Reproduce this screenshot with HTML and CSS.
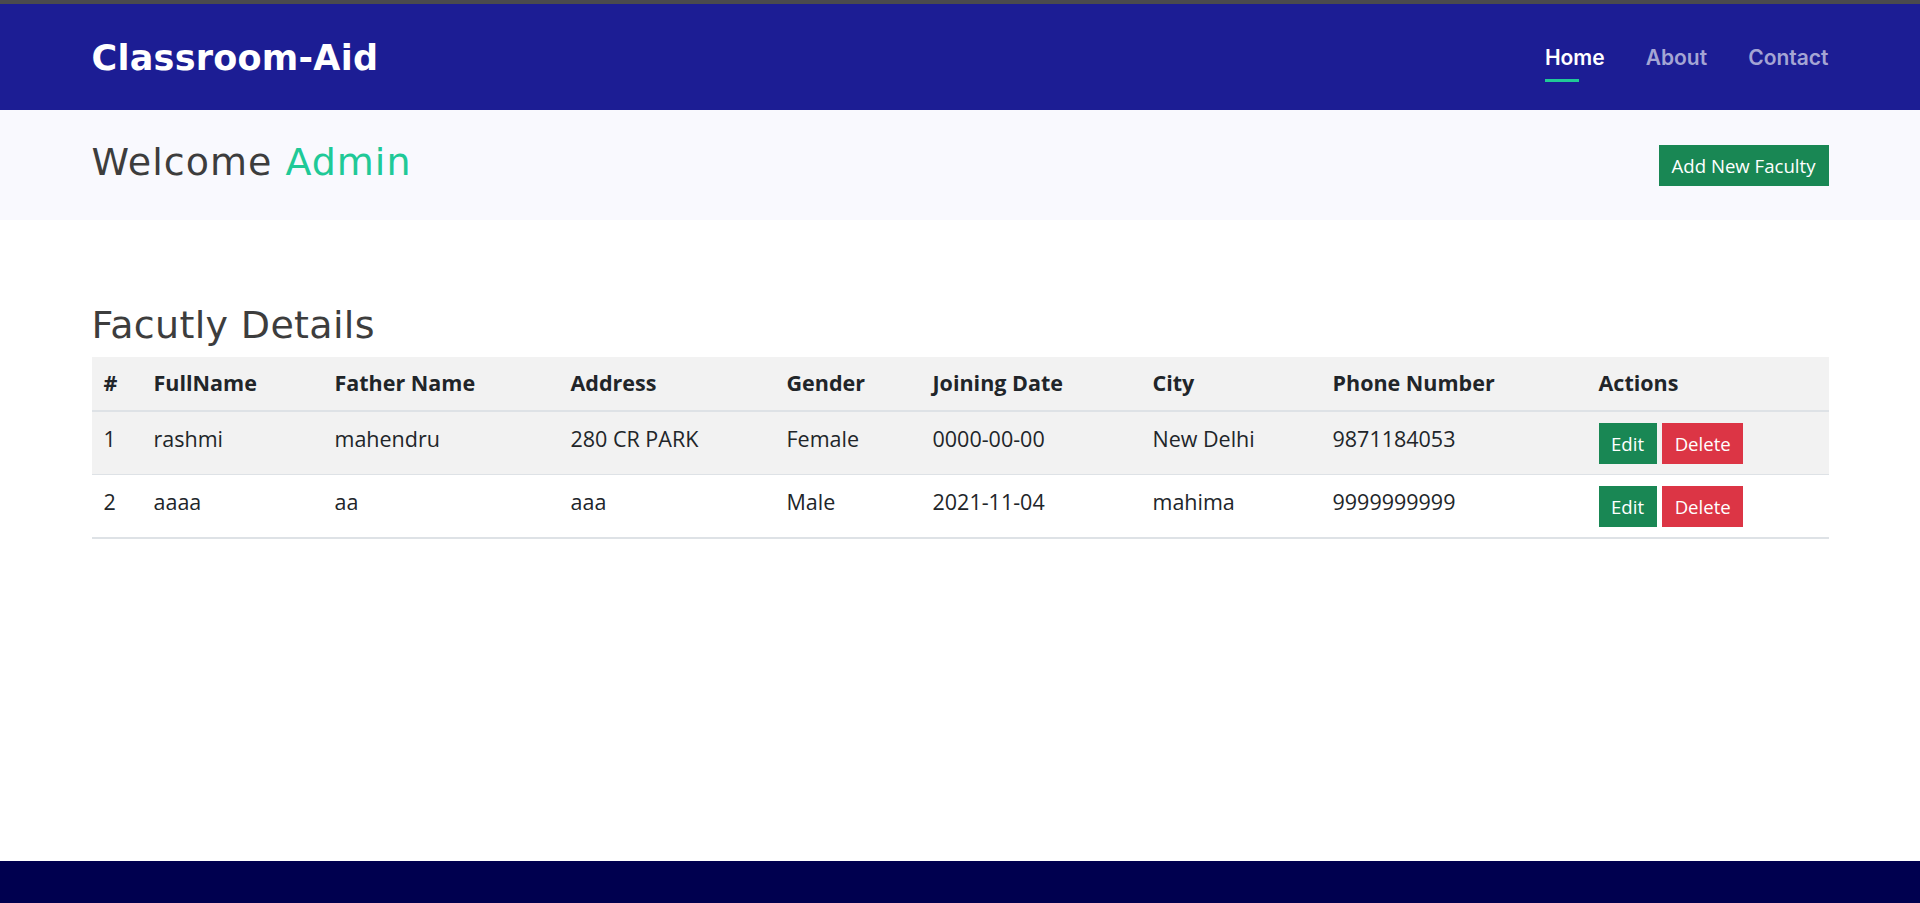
FILE: index.html
```html
<!DOCTYPE html>
<html lang="en">
<head>
<meta charset="utf-8">
<title>Classroom-Aid</title>
<link rel="stylesheet" href="styles.css">
</head>
<body>
<div class="page">
  <div class="topbar"></div>
  <header class="navbar">
    <div class="container nav-inner">
      <a class="brand" href="#">Classroom-Aid</a>
      <nav>
        <ul class="nav-links">
          <li><a class="nav-link active" href="#">Home</a></li>
          <li><a class="nav-link" href="#">About</a></li>
          <li><a class="nav-link" href="#">Contact</a></li>
        </ul>
      </nav>
    </div>
  </header>

  <section class="welcome">
    <div class="container welcome-inner">
      <h1 class="welcome-title">Welcome <span class="accent">Admin</span></h1>
      <button class="btn btn-success btn-add">Add New Faculty</button>
    </div>
  </section>

  <main class="content">
    <div class="container">
      <h2 class="section-title">Facutly Details</h2>
      <table class="faculty-table">
        <colgroup>
          <col class="c1"><col class="c2"><col class="c3"><col class="c4"><col class="c5"><col class="c6"><col class="c7"><col class="c8"><col class="c9">
        </colgroup>
        <thead>
          <tr>
            <th>#</th>
            <th>FullName</th>
            <th>Father Name</th>
            <th>Address</th>
            <th>Gender</th>
            <th>Joining Date</th>
            <th>City</th>
            <th>Phone Number</th>
            <th>Actions</th>
          </tr>
        </thead>
        <tbody>
          <tr class="striped">
            <td>1</td>
            <td>rashmi</td>
            <td>mahendru</td>
            <td>280 CR PARK</td>
            <td>Female</td>
            <td>0000-00-00</td>
            <td>New Delhi</td>
            <td>9871184053</td>
            <td><button class="btn btn-success">Edit</button> <button class="btn btn-danger">Delete</button></td>
          </tr>
          <tr>
            <td>2</td>
            <td>aaaa</td>
            <td>aa</td>
            <td>aaa</td>
            <td>Male</td>
            <td>2021-11-04</td>
            <td>mahima</td>
            <td>9999999999</td>
            <td><button class="btn btn-success">Edit</button> <button class="btn btn-danger">Delete</button></td>
          </tr>
        </tbody>
      </table>
    </div>
  </main>

  <footer class="footer"></footer>
</div>
</body>
</html>
```

FILE: styles.css
```css
* {
  box-sizing: border-box;
}

html, body {
  margin: 0;
  padding: 0;
}

body {
  font-family: "Open Sans", "Liberation Sans", sans-serif;
  font-size: 18px;
  line-height: 1.5;
  color: #212529;
  background: #ffffff;
}

.page {
  min-height: 100vh;
  display: flex;
  flex-direction: column;
}

.container {
  width: 1737px;
  margin: 0 auto;
}

.topbar {
  height: 4px;
  background: #4a4a4e;
}

.navbar {
  background: #1c1d94;
  height: 106px;
}

.nav-inner {
  height: 100%;
  display: flex;
  align-items: center;
  justify-content: space-between;
}

.brand {
  font-family: "DejaVu Sans", sans-serif;
  font-weight: bold;
  font-size: 35px;
  line-height: 1.2;
  color: #ffffff;
  text-decoration: none;
  letter-spacing: 0.25px;
  margin-top: 2px;
}

.nav-links {
  list-style: none;
  margin: 2px 0 0;
  padding: 0;
  display: flex;
  gap: 41px;
}

.nav-link {
  position: relative;
  display: block;
  font-family: "Inter", "Noto Sans", sans-serif;
  font-weight: 600;
  font-size: 21px;
  line-height: 1.2;
  color: #a4a5d4;
  text-decoration: none;
}

.nav-link.active {
  color: #ffffff;
}

.nav-link.active::after {
  content: "";
  position: absolute;
  left: 0;
  top: 34px;
  width: 34px;
  height: 3px;
  background: #20c997;
}

.welcome {
  background: #f9f9fe;
  padding: 28px 0 34px;
}

.welcome-inner {
  display: flex;
  justify-content: space-between;
  align-items: flex-start;
}

.welcome-title {
  margin: 2px 0 0;
  font-family: "DejaVu Sans", sans-serif;
  font-weight: normal;
  font-size: 38px;
  line-height: 1.2;
  letter-spacing: 1px;
  color: #3d3d3d;
}

.accent {
  color: #20c997;
}

.btn {
  display: inline-block;
  font-family: "Open Sans", "Liberation Sans", sans-serif;
  font-size: 18.6px;
  line-height: 27px;
  padding: 6px 11.5px;
  border: 1px solid transparent;
  border-radius: 0;
  color: #ffffff;
  cursor: pointer;
  vertical-align: top;
}

.btn-success {
  background: #198754;
  border-color: #198754;
}

.btn-danger {
  background: #dc3545;
  border-color: #dc3545;
}

.btn-add {
  margin-top: 7px;
  padding: 6px 12px;
}

.content {
  padding-top: 83px;
}

.section-title {
  margin: 0 0 8px;
  font-family: "DejaVu Sans", sans-serif;
  font-weight: normal;
  font-size: 38px;
  line-height: 1.2;
  letter-spacing: 0.33px;
  color: #3d3d3d;
}

.faculty-table {
  width: 100%;
  table-layout: fixed;
  border-collapse: collapse;
  border-bottom: 2px solid #dee2e6;
  font-size: 21.5px;
  line-height: 32px;
}

.c1 { width: 50px; }
.c2 { width: 181px; }
.c3 { width: 236px; }
.c4 { width: 216px; }
.c5 { width: 146px; }
.c6 { width: 220px; }
.c7 { width: 180px; }
.c8 { width: 266px; }
.c9 { width: 242px; }

.faculty-table th {
  text-align: left;
  font-weight: bold;
  padding: 10px 12px 11px;
  background: #f2f2f2;
  border-bottom: 2px solid #dee2e6;
  vertical-align: top;
  white-space: nowrap;
}

.faculty-table td {
  padding: 11px 12px 10px;
  border-top: 1px solid #dee2e6;
  vertical-align: top;
  white-space: nowrap;
}

.faculty-table tr.striped td {
  background: #f2f2f2;
}

.footer {
  margin-top: auto;
  height: 42px;
  background: #00004f;
}
```
